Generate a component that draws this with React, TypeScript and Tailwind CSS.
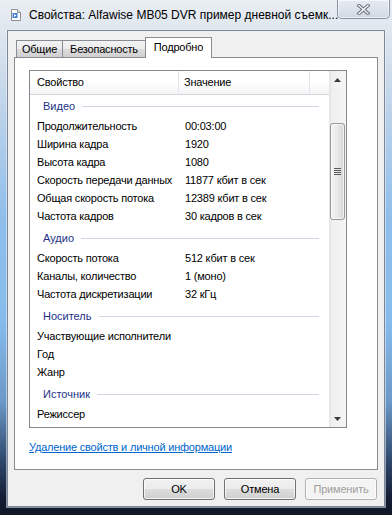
import React from 'react';

const groups = [
  {
    title: 'Видео',
    rows: [
      ['Продолжительность', '00:03:00'],
      ['Ширина кадра', '1920'],
      ['Высота кадра', '1080'],
      ['Скорость передачи данных', '11877 кбит в сек'],
      ['Общая скорость потока', '12389 кбит в сек'],
      ['Частота кадров', '30 кадров в сек'],
    ],
  },
  {
    title: 'Аудио',
    rows: [
      ['Скорость потока', '512 кбит в сек'],
      ['Каналы, количество', '1 (моно)'],
      ['Частота дискретизации', '32 кГц'],
    ],
  },
  {
    title: 'Носитель',
    rows: [
      ['Участвующие исполнители', ''],
      ['Год', ''],
      ['Жанр', ''],
    ],
  },
  { title: 'Источник', rows: [['Режиссер', '']] },
];

function FileIcon() {
  return (
    <svg width="10" height="12" viewBox="0 0 10 12" className="shrink-0">
      <path d="M0.5 0.5h6l3 3v8h-9z" fill="#fff" stroke="#8a8f98" />
      <path d="M6.5 0.5v3h3" fill="#e6e9ee" stroke="#8a8f98" />
      <rect x="1.5" y="4" width="5" height="5" fill="#3f7fd0" />
      <path d="M3 5l2.5 1.5L3 8z" fill="#fff" />
    </svg>
  );
}

function CloseButton() {
  return (
    <div className="absolute top-0 right-[2px] w-[53px] h-[19px] rounded-b-[5px] border border-t-0 border-[#8794a6] bg-[linear-gradient(180deg,#e6ebf1_0%,#dde3ea_50%,#cfd8e2_100%)] shadow-[inset_0_0_0_1px_rgba(255,255,255,0.6)] flex items-center justify-center">
      <svg width="13" height="11" viewBox="0 0 13 11">
        <path d="M2 1.5l9 8M11 1.5l-9 8" stroke="#5f6670" strokeWidth="3.4" strokeLinecap="square" />
        <path d="M2 1.5l9 8M11 1.5l-9 8" stroke="#eef1f4" strokeWidth="1.6" strokeLinecap="square" />
      </svg>
    </div>
  );
}

function Tab({ label, active, width }: { label: string; active?: boolean; width: string }) {
  if (active) {
    return (
      <div className={`relative z-10 -ml-[1px] -mb-[1px] h-[21px] ${width} border border-b-0 border-[#898c95] bg-white flex items-start justify-center pt-[2px] leading-[14px]`}>
        {label}
      </div>
    );
  }
  return (
    <div className={`-ml-[1px] first:ml-0 h-[17px] ${width} border border-b-0 border-[#898c95] bg-[linear-gradient(180deg,#f2f2f2_0%,#ebebeb_50%,#dddddd_51%,#cfcfcf_100%)] flex items-center justify-center leading-[14px]`}>
      {label}
    </div>
  );
}

function Button({ label, disabled }: { label: string; disabled?: boolean }) {
  return (
    <div
      className={`w-[72px] h-[22px] rounded-[3px] border flex items-center justify-center shadow-[inset_0_0_0_1px_rgba(255,255,255,0.7)] ${
        disabled
          ? 'border-[#adb2b5] bg-[#f4f4f4] text-[#a0a0a0]'
          : 'border-[#707070] bg-[linear-gradient(180deg,#f2f2f2_0%,#ebebeb_50%,#dddddd_51%,#cfcfcf_100%)] text-black'
      }`}
    >
      {label}
    </div>
  );
}

function Scrollbar() {
  return (
    <div className="w-[17px] h-full flex flex-col bg-[linear-gradient(90deg,#e3e3e3_0%,#f0f0f0_20%,#f5f5f5_100%)]">
      <div className="h-[17px] flex items-center justify-center">
        <svg width="7" height="4" viewBox="0 0 7 4">
          <path d="M0 4L3.5 0L7 4z" fill="#3a3a3a" />
        </svg>
      </div>
      <div className="h-[35px]" />
      <div className="mx-[1px] h-[97px] rounded-[3px] border border-[#979797] bg-[linear-gradient(90deg,#f3f3f3_0%,#e9e9e9_50%,#d6d6d6_100%)] shadow-[inset_0_0_0_1px_rgba(255,255,255,0.7)] flex flex-col items-center justify-center gap-[1px]">
        <div className="w-[7px] h-[1px] bg-[#5a5a5a]" />
        <div className="w-[7px] h-[1px] bg-[#5a5a5a]" />
        <div className="w-[7px] h-[1px] bg-[#5a5a5a]" />
        <div className="w-[7px] h-[1px] bg-[#5a5a5a]" />
      </div>
      <div className="flex-1" />
      <div className="h-[17px] flex items-center justify-center">
        <svg width="7" height="4" viewBox="0 0 7 4">
          <path d="M0 0L3.5 4L7 0z" fill="#3a3a3a" />
        </svg>
      </div>
    </div>
  );
}

function ListView() {
  return (
    <div className="w-[318px] h-[358px] border border-[#828790] bg-white flex">
      <div className="flex-1 flex flex-col overflow-hidden">
        {/* column header */}
        <div className="h-[24px] flex border-b border-[#d5d5d5] bg-[linear-gradient(180deg,#ffffff_0%,#ffffff_45%,#f3f4f6_100%)] shrink-0">
          <div className="w-[149px] pl-[7px] flex items-center border-r border-[#e3e5e9]">Свойство</div>
          <div className="w-[131px] pl-[5px] flex items-center border-r border-[#e3e5e9]">Значение</div>
          <div className="flex-1" />
        </div>
        {groups.map((g, gi) => (
          <div key={g.title}>
            <div className={`flex items-start pl-[13px] pr-[10px] ${gi === 0 ? 'h-[22px] pt-[4px]' : 'h-[24px] pt-[6px]'}`}>
              <span className="leading-[14px] text-[#1e3287] tracking-[0px]">{g.title}</span>
              <div className="flex-1 h-[1px] bg-[#cfd6e4] ml-[7px] mt-[7px]" />
            </div>
            {g.rows.map(([k, v]) => (
              <div key={k} className="h-[18px] flex items-center">
                <div className="w-[150px] pl-[7px] whitespace-nowrap">{k}</div>
                <div className="pl-[5px] whitespace-nowrap">{v}</div>
              </div>
            ))}
          </div>
        ))}
      </div>
      <Scrollbar />
    </div>
  );
}

export default function App() {
  return (
    <div className="w-[392px] h-[515px] relative overflow-hidden font-['Liberation_Sans',Arial,sans-serif] text-[11px] tracking-[-0.2px] text-black bg-[linear-gradient(180deg,#e9eef3_0%,#dfe6ee_6%,#bcd2ea_22%,#8fbeeb_42%,#86bcec_62%,#6b98c8_78%,#2d4468_90%,#131c31_97%,#101827_100%)]">
      {/* title bar */}
      <div className="h-[30px] flex items-center pl-[11px] gap-[8px]">
        <FileIcon />
        <span className="text-[12px] tracking-[0px] leading-[14px] whitespace-nowrap">Свойства: Alfawise MB05 DVR пример дневной съемк...</span>
      </div>
      <CloseButton />

      {/* client area */}
      <div className="mx-[7px] h-[477px] border border-[#7d8797] bg-[#f0f0f0] shadow-[0_0_0_1px_rgba(235,242,250,0.55)] flex flex-col px-[6px]">
        <div className="h-[26px] flex items-end pl-[2px] shrink-0">
          <Tab label="Общие" width="w-[47px]" />
          <Tab label="Безопасность" width="w-[84px]" />
          <Tab label="Подробно" width="w-[67px]" active />
        </div>
        <div className="h-[413px] border border-[#898c95] bg-white pl-[14px] pt-[12px] shrink-0">
          <ListView />
          <div className="mt-[12px] leading-[14px] text-[#0066cc] underline underline-offset-[1px]">
            Удаление свойств и личной информации
          </div>
        </div>
        <div className="mt-[8px] flex justify-end gap-[9px] pr-[1px]">
          <Button label="OK" />
          <Button label="Отмена" />
          <Button label="Применить" disabled />
        </div>
      </div>
    </div>
  );
}
